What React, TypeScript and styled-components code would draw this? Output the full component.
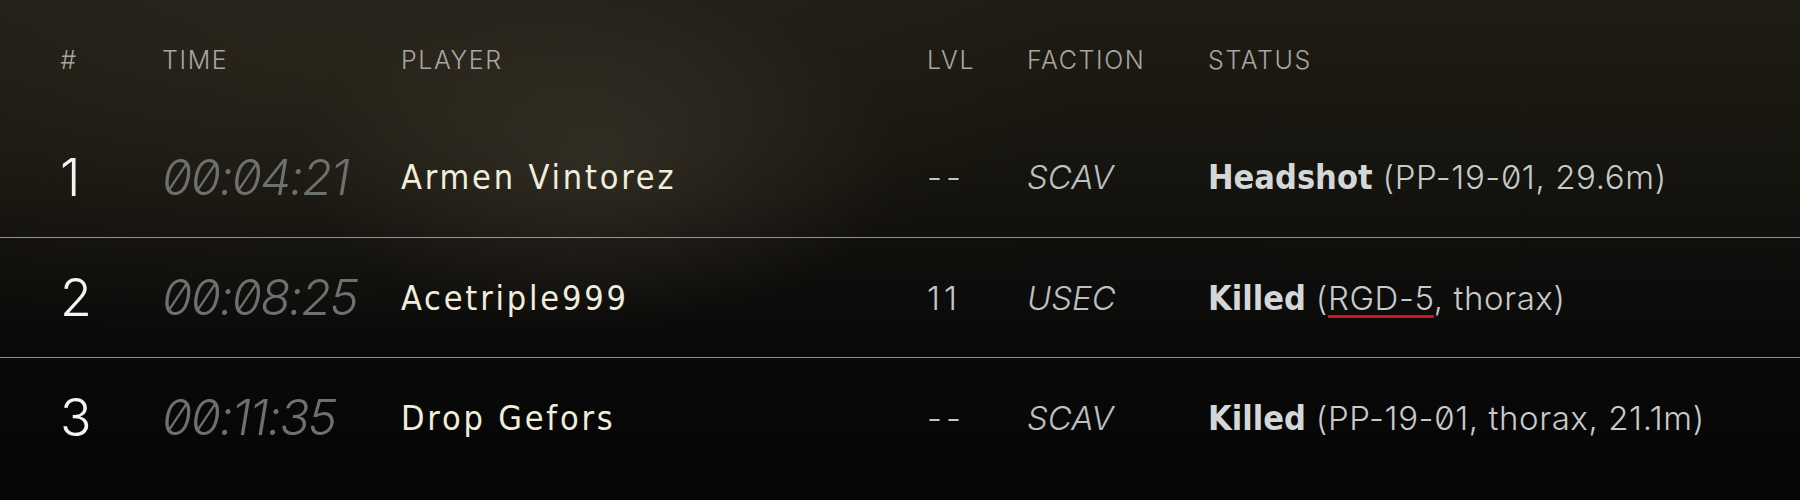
import React from "react";
import styled, { createGlobalStyle } from "styled-components";

const GlobalStyle = createGlobalStyle`
  html, body {
    margin: 0;
    padding: 0;
    background: #050505;
  }
`;

const COLUMNS = "102px 239px 526px 100px 181px 1fr";

const Board = styled.div`
  width: 1800px;
  height: 500px;
  overflow: hidden;
  display: flex;
  flex-direction: column;
  background:
    radial-gradient(ellipse 300px 170px at 600px 160px, rgba(125, 116, 100, 0.2), rgba(125, 116, 100, 0) 100%),
    radial-gradient(ellipse 760px 280px at 320px 60px, rgba(62, 54, 38, 0.38), rgba(62, 54, 38, 0) 100%),
    linear-gradient(to bottom, #1f1c16 0%, #17150f 30%, #0f0e0c 52%, #090909 72%, #050505 100%);
`;

const HeaderRow = styled.div`
  display: grid;
  grid-template-columns: ${COLUMNS};
  align-items: center;
  height: 117px;
  padding-left: 60px;
  box-sizing: border-box;
`;

const HeadCell = styled.div<{ $slant?: boolean }>`
  font-family: Inter, "DejaVu Sans", sans-serif;
  font-weight: 300;
  font-size: 25px;
  font-style: ${(p) => (p.$slant ? "italic" : "normal")};
  letter-spacing: 1.6px;
  color: #a8a69e;
  text-transform: uppercase;
  padding-top: 2px;
`;

const Row = styled.div<{ $divider?: boolean }>`
  display: grid;
  grid-template-columns: ${COLUMNS};
  align-items: center;
  height: 120px;
  padding-left: 60px;
  box-sizing: border-box;
  border-top: ${(p) => (p.$divider ? "1px solid rgba(196, 196, 188, 0.72)" : "none")};
`;

const Index = styled.div`
  font-family: Inter, "DejaVu Sans", sans-serif;
  font-weight: 300;
  font-size: 52px;
  color: #f4f4f2;
`;

const Time = styled.div`
  font-family: Inter, "DejaVu Sans", sans-serif;
  font-weight: 300;
  font-style: italic;
  font-size: 49px;
  letter-spacing: -1.5px;
  color: #6c706e;
  font-feature-settings: "zero" 1, "tnum" 0;
`;

const Player = styled.div`
  font-family: "DejaVu Sans Condensed", "DejaVu Sans", sans-serif;
  font-stretch: condensed;
  font-size: 34px;
  letter-spacing: 2.8px;
  color: #f0eedb;
`;

const Level = styled.div`
  font-family: Inter, "DejaVu Sans", sans-serif;
  font-weight: 300;
  font-size: 33px;
  letter-spacing: 4px;
  color: #c3c7c7;
`;

const Faction = styled.div`
  font-family: Inter, "DejaVu Sans", sans-serif;
  font-weight: 300;
  font-style: italic;
  font-size: 33px;
  color: #bcc0c0;
`;

const Status = styled.div`
  font-family: Inter, "DejaVu Sans", sans-serif;
  font-weight: 300;
  font-size: 33px;
  letter-spacing: 0.6px;
  color: #c6cacb;
  white-space: nowrap;
  font-feature-settings: "zero" 1;
`;

const Verdict = styled.span`
  font-family: "DejaVu Sans Condensed", "DejaVu Sans", sans-serif;
  font-stretch: condensed;
  font-weight: 700;
  font-size: 34px;
  letter-spacing: 0;
  color: #d4d7d7;
  margin-right: 10px;
`;

const Weapon = styled.span`
  text-decoration: underline;
  text-decoration-color: #d4141c;
  text-decoration-thickness: 3px;
  text-underline-offset: 5px;
`;

type Kill = {
  n: number;
  time: string;
  player: string;
  level: string;
  faction: string;
  verdict: string;
  weapon: string;
  rest: string;
  marked?: boolean;
};

const kills: Kill[] = [
  { n: 1, time: "00:04:21", player: "Armen Vintorez", level: "--", faction: "SCAV", verdict: "Headshot", weapon: "PP-19-01", rest: ", 29.6m" },
  { n: 2, time: "00:08:25", player: "Acetriple999", level: "11", faction: "USEC", verdict: "Killed", weapon: "RGD-5", rest: ", thorax", marked: true },
  { n: 3, time: "00:11:35", player: "Drop Gefors", level: "--", faction: "SCAV", verdict: "Killed", weapon: "PP-19-01", rest: ", thorax, 21.1m" },
];

export default function App() {
  return (
    <>
      <GlobalStyle />
      <Board>
        <HeaderRow>
          <HeadCell $slant>#</HeadCell>
          <HeadCell>Time</HeadCell>
          <HeadCell>Player</HeadCell>
          <HeadCell>Lvl</HeadCell>
          <HeadCell>Faction</HeadCell>
          <HeadCell>Status</HeadCell>
        </HeaderRow>
        {kills.map((k, i) => (
          <Row key={k.n} $divider={i > 0}>
            <Index>{k.n}</Index>
            <Time>{k.time}</Time>
            <Player>{k.player}</Player>
            <Level>{k.level}</Level>
            <Faction>{k.faction}</Faction>
            <Status>
              <Verdict>{k.verdict}</Verdict>(
              {k.marked ? <Weapon>{k.weapon}</Weapon> : k.weapon}
              {k.rest})
            </Status>
          </Row>
        ))}
      </Board>
    </>
  );
}
